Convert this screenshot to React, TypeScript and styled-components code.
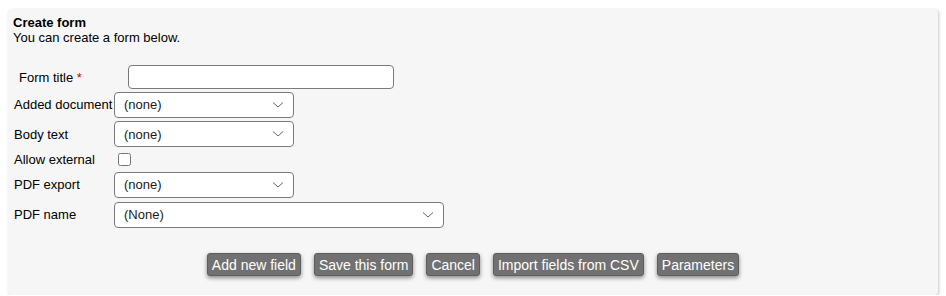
import React from 'react';
import styled, { createGlobalStyle } from 'styled-components';

const GlobalStyle = createGlobalStyle`
  body {
    margin: 0;
    padding: 9px 8px 0 8px;
    background: #ffffff;
    font-family: "Liberation Sans", Arial, sans-serif;
    font-size: 13px;
    color: #000;
  }
`;

const Panel = styled.div`
  background: #f6f6f6;
  border-radius: 4px;
  box-shadow: 1px 1px 3px rgba(0, 0, 0, 0.22);
  padding: 6px 5px 19px 5px;
  width: 930px;
  box-sizing: border-box;
  height: 286px;
`;

const Title = styled.div`
  font-weight: bold;
  line-height: 15px;
`;

const Subtitle = styled.div`
  line-height: 15px;
`;

const Form = styled.div`
  margin-top: 19px;
  display: flex;
  flex-direction: column;
`;

const Row = styled.div<{ $h: number; $indent?: number }>`
  display: flex;
  align-items: center;
  height: ${({ $h }) => $h}px;
  padding-left: ${({ $indent }) => $indent || 0}px;
`;

const Label = styled.label<{ $w?: number }>`
  width: ${({ $w }) => $w || 101}px;
  box-sizing: border-box;
  flex-shrink: 0;
  white-space: nowrap;
  padding-left: 1px;
`;

const Required = styled.span`
  color: #d40000;
`;

const TextInput = styled.input`
  width: 266px;
  height: 24px;
  box-sizing: border-box;
  border: 1px solid #7a7a7a;
  border-radius: 4px;
  background: #fff;
  font: inherit;
`;

const SelectWrap = styled.div<{ $w: number }>`
  position: relative;
  width: ${({ $w }) => $w}px;
  height: 26px;
`;

const Select = styled.select`
  appearance: none;
  width: 100%;
  height: 100%;
  box-sizing: border-box;
  border: 1px solid #7a7a7a;
  border-radius: 4px;
  background: #fff;
  font-family: inherit;
  font-size: 13px;
  color: #1a1a1a;
  padding: 0 0 0 9px;
  outline: none;
`;

const Chevron = styled.svg`
  position: absolute;
  right: 10px;
  top: 9px;
  pointer-events: none;
`;

const Checkbox = styled.input`
  margin: 0 0 0 4px;
  width: 13px;
  height: 13px;
`;

const Buttons = styled.div`
  display: flex;
  justify-content: center;
  gap: 13px;
  margin-top: 23px;
`;

const Button = styled.button`
  background: #717171;
  color: #fff;
  border: 1px solid #5e5e5e;
  border-radius: 3px;
  font-family: inherit;
  font-size: 14px;
  height: 23px;
  padding: 0 4px;
  box-shadow: 0 2px 4px rgba(0, 0, 0, 0.45);
  cursor: pointer;
`;

const Dropdown: React.FC<{ width: number; value: string }> = ({ width, value }) => (
  <SelectWrap $w={width}>
    <Select defaultValue={value}>
      <option>{value}</option>
    </Select>
    <Chevron width="12" height="8" viewBox="0 0 12 8">
      <path d="M1 1.5 L6 6 L11 1.5" fill="none" stroke="#666" strokeWidth="1" />
    </Chevron>
  </SelectWrap>
);

export default function App() {
  return (
    <>
      <GlobalStyle />
      <Panel>
        <Title>Create form</Title>
        <Subtitle>You can create a form below.</Subtitle>
        <Form>
          <Row $h={26} $indent={5}>
            <Label $w={110}>
              Form title <Required>*</Required>
            </Label>
            <TextInput type="text" />
          </Row>
          <Row $h={29}>
            <Label>Added document</Label>
            <Dropdown width={180} value="(none)" />
          </Row>
          <Row $h={30}>
            <Label>Body text</Label>
            <Dropdown width={180} value="(none)" />
          </Row>
          <Row $h={21}>
            <Label>Allow external</Label>
            <Checkbox type="checkbox" />
          </Row>
          <Row $h={29}>
            <Label>PDF export</Label>
            <Dropdown width={180} value="(none)" />
          </Row>
          <Row $h={31}>
            <Label>PDF name</Label>
            <Dropdown width={330} value="(None)" />
          </Row>
        </Form>
        <Buttons>
          <Button>Add new field</Button>
          <Button>Save this form</Button>
          <Button>Cancel</Button>
          <Button>Import fields from CSV</Button>
          <Button>Parameters</Button>
        </Buttons>
      </Panel>
    </>
  );
}
